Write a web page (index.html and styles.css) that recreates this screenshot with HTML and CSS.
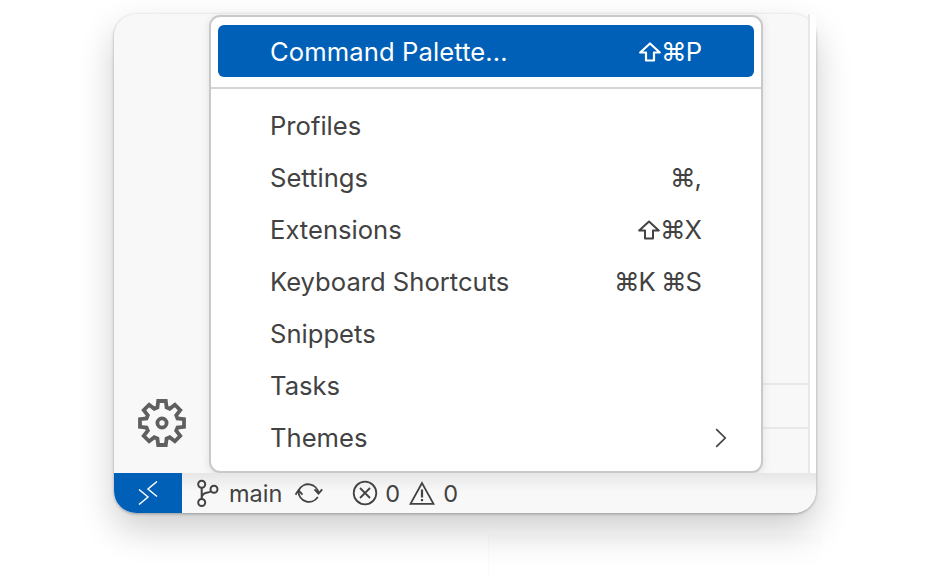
FILE: index.html
```html
<!DOCTYPE html>
<html lang="en">
<head>
<meta charset="utf-8">
<title>Manage menu</title>
<link rel="stylesheet" href="styles.css">
</head>
<body>
<div class="window">
  <div class="main">
    <aside class="activity">
      <svg class="gear" viewBox="0 0 48 48" width="48" height="48" fill="none" stroke="#5f5f5f" stroke-width="3.800" stroke-linejoin="miter">
        <polygon points="19.4,8.5 20.2,2 27.8,2 28.6,8.5 31.71,9.79 36.87,5.76 42.24,11.13 38.21,16.29 39.5,19.4 46,20.2 46,27.8 39.5,28.6 38.21,31.71 42.24,36.87 36.87,42.24 31.71,38.21 28.6,39.5 27.8,46 20.2,46 19.4,39.5 16.29,38.21 11.13,42.24 5.76,36.87 9.79,31.71 8.5,28.6 2,27.8 2,20.2 8.5,19.4 9.79,16.29 5.76,11.13 11.13,5.76 16.29,9.79"/>
        <circle cx="24" cy="24" r="4.600"/>
      </svg>
    </aside>
    <div class="editor">
      <div class="panel"><div class="cell tall"></div><div class="cell"></div><div class="cell end"></div></div>
      <div class="edge"></div>
    </div>
    <nav class="menu">
      <div class="item active"><span>Command Palette...</span><span class="keys"><svg class="shift" viewBox="0 0 22 20" width="22" height="20" fill="none" stroke="currentColor" stroke-width="2.200" stroke-linejoin="round"><path d="M11 1.500 1.200 10.500H7V18.500h8V10.500h5.800z"/></svg>⌘P</span></div>
      <div class="sep"></div>
      <div class="item"><span>Profiles</span></div>
      <div class="item"><span>Settings</span><span class="keys">⌘,</span></div>
      <div class="item"><span>Extensions</span><span class="keys"><svg class="shift" viewBox="0 0 22 20" width="22" height="20" fill="none" stroke="currentColor" stroke-width="2" stroke-linejoin="round"><path d="M11 1.500 1.200 10.500H7V18.500h8V10.500h5.800z"/></svg>⌘X</span></div>
      <div class="item"><span>Keyboard Shortcuts</span><span class="keys">⌘K ⌘S</span></div>
      <div class="item"><span>Snippets</span></div>
      <div class="item"><span>Tasks</span></div>
      <div class="item"><span>Themes</span>
        <svg class="chev" viewBox="0 0 12 20" width="12" height="20" fill="none" stroke="#424242" stroke-width="1.700"><path d="M1.200 1.200 10.200 10l-9 8.800"/></svg>
      </div>
    </nav>
  </div>
  <footer class="status">
    <div class="remote">
      <svg viewBox="0 0 20 24" width="20" height="24" fill="none" stroke="#fff" stroke-width="1.500"><path d="M1 8.500 10 16l-9 7.500"/><path d="M19 .5 10 8l9 7.500"/></svg>
    </div>
    <div class="stat first">
      <svg viewBox="0 0 24 32" width="24" height="32" fill="none" stroke="#424242" stroke-width="2"><circle cx="5.700" cy="7.200" r="3.500"/><circle cx="5.700" cy="25.500" r="3.500"/><circle cx="18" cy="12.200" r="3.500"/><path d="M5.700 10.700V22M5.700 21c0-4 3-5 6-5.500 2-.3 3-1 3.400-1.500"/></svg>
      <span>main</span>
    </div>
    <svg class="sync" viewBox="0 0 28 22" width="28" height="22" fill="none" stroke="#424242" stroke-width="1.800"><path d="M3.800 8A10.500 10.500 0 0 1 23.500 11"/><path d="M22.800 15A10.500 10.500 0 0 1 3.500 9"/><path d="M19.500 7.300 23.500 11.700 27.200 7.300M.5 12.700 3.500 8.300 7.500 12.700"/></svg>
    <div class="stat errors">
      <svg viewBox="0 0 26 26" width="26" height="26" fill="none" stroke="#424242" stroke-width="1.800"><circle cx="13" cy="13" r="11.300"/><path d="m8 8 10 10M18 8 8 18"/></svg>
      <span>0</span>
    </div>
    <div class="stat warns">
      <svg viewBox="0 0 26 24" width="26" height="24" fill="none" stroke="#424242" stroke-width="1.800"><path d="M13 2 1.500 22.800h23z"/><path d="M13 8.500v8" stroke-width="2.200"/><path d="M13 18v2.200" stroke-width="2.200"/></svg>
      <span>0</span>
    </div>
  </footer>
</div>
<div class="ghost"></div>
</body>
</html>
```
FILE: styles.css
```css
html, body { margin: 0; height: 100%; background: #fff; overflow: hidden; }
body { padding: 14px 0 0 114px; box-sizing: border-box; font-family: Inter, "DejaVu Sans", sans-serif; color: #424242; position: relative; }
.window {
  width: 702px; height: 499px; background: #f8f8f8; border-radius: 22px;
  display: flex; flex-direction: column; position: relative;
  box-shadow: 0 1px 3px rgba(0,0,0,.3), 0 16px 36px rgba(0,0,0,.2);
}
.ghost { position: absolute; left: 488px; top: 534px; width: 333px; height: 42px; box-sizing: border-box; border-left: 1px solid rgba(0,0,0,.018); background: linear-gradient(rgba(0,0,0,.008), rgba(0,0,0,0)); }
.main { flex: 1; display: flex; position: relative; min-height: 0; }
.activity { width: 95px; display: flex; align-items: flex-end; justify-content: center; padding-bottom: 26px; box-sizing: border-box; }
.gear { display: block; }
.editor { flex: 1; display: flex; justify-content: flex-end; }
.panel { width: 46px; border-right: 2px solid #e8e8e8; display: flex; flex-direction: column; box-sizing: content-box; }
.edge { width: 6px; background: #fff; border-top-right-radius: 22px; }
.cell { height: 44px; border-bottom: 2px solid #e8e8e8; box-sizing: border-box; }
.cell.tall { height: 371px; }
.cell.end { flex: 1; border: 0; }
.menu {
  position: absolute; left: 95px; top: 1px; width: 554px; height: 458px; box-sizing: border-box;
  background: #fff; border: 2px solid #c9c9c9; border-radius: 11px; padding: 8px 7px; box-shadow: 0 2px 10px rgba(0,0,0,.1);
  display: flex; flex-direction: column;
}
.item { height: 52px; flex: none; display: flex; align-items: center; justify-content: space-between; padding: 0 53px 0 52px; border-radius: 6px; font-size: 25.6px; line-height: 52px; }
.item.active { background: #0060b8; color: #fff; padding-top: 1px; box-sizing: border-box; letter-spacing: .1px; }
.keys { display: flex; align-items: center; letter-spacing: -1px; }
.sep { height: 2px; background: #d4d4d4; margin: 10px -7px 11px; flex: none; }
.chev { margin-right: -26px; }
.status { height: 40px; flex: none; display: flex; align-items: center; font-size: 23.5px; border-radius: 0 0 22px 22px; position: relative; background: linear-gradient(#e6e6e6, #f8f8f8 45%); }
.remote { width: 68px; height: 40px; background: #0060b8; border-bottom-left-radius: 22px; display: flex; align-items: center; justify-content: center; }
.stat { display: flex; align-items: center; gap: 7px; }
.first { margin-left: 14px; gap: 9px; }
.sync { margin-left: 13px; }
.errors { margin-left: 29px; }
.warns { margin-left: 9px; gap: 8px; }
```
